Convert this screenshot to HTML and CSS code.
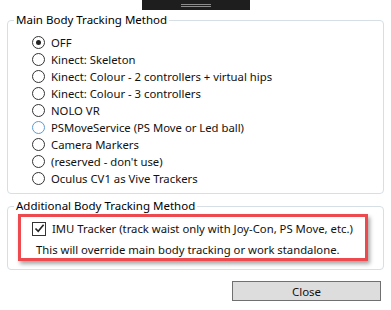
FILE: index.html
```html
<!DOCTYPE html>
<html lang="en">

<head>
  <meta charset="UTF-8">
  <meta name="viewport" content="width=device-width, initial-scale=1.0">
  <title>Tracking Method</title>
  <link rel="stylesheet" href="styles.css">
</head>

<body>
  <!-- window grip at the top -->
  <div class="grip-wrap">
    <div class="grip"><span></span><span></span></div>
  </div>

  <!-- main tracking -->
  <fieldset class="group">
    <legend>Main Body Tracking Method</legend>
    <div class="options">
      <div class="option"><span class="radio checked"></span>OFF</div>
      <div class="option"><span class="radio"></span>Kinect: Skeleton</div>
      <div class="option"><span class="radio"></span>Kinect: Colour - 2 controllers + virtual hips</div>
      <div class="option"><span class="radio"></span>Kinect: Colour - 3 controllers</div>
      <div class="option"><span class="radio"></span>NOLO VR</div>
      <div class="option"><span class="radio hover"></span>PSMoveService (PS Move or Led ball)</div>
      <div class="option"><span class="radio"></span>Camera Markers</div>
      <div class="option"><span class="radio"></span>(reserved - don't use)</div>
      <div class="option"><span class="radio"></span>Oculus CV1 as Vive Trackers</div>
    </div>
  </fieldset>

  <!-- additional tracking -->
  <fieldset class="group group-extra">
    <legend>Additional Body Tracking Method</legend>
    <div class="highlight">
      <div class="option">
        <span class="checkbox">
          <svg width="11" height="11" viewBox="0 0 11 11"><path d="M1.5 5.5 L4.2 8.3 L9.6 1.8" fill="none" stroke="#222" stroke-width="1.6"/></svg>
        </span>
        IMU Tracker (track waist only with Joy-Con, PS Move, etc.)
      </div>
      <div class="note">This will override main body tracking or work standalone.</div>
    </div>
  </fieldset>

  <div class="actions">
    <button class="btn">Close</button>
  </div>
</body>

</html>
```

FILE: styles.css
```css
body {
  margin: 0;
  background: #fff;
  font-family: "Noto Sans", sans-serif;
  font-size: 11.3px;
  color: #111;
}

/* 窗口顶部把手 */
.grip-wrap {
  display: flex;
  justify-content: center;
}

.grip {
  width: 108px;
  height: 10px;
  background: #1e1e1e;
  display: flex;
  flex-direction: column;
  align-items: center;
  justify-content: center;
  gap: 1px;
}

.grip span {
  width: 30px;
  height: 1px;
  background: #8c8c8c;
}

/* 分组框 */
.group {
  margin: 2px 7px 0;
  padding: 6px 6px 6px 6px;
  border: 1px solid #d5dfe5;
  border-radius: 4px;
}

.group legend {
  padding: 0 2px;
  line-height: 16px;
  font-size: 11.5px;
  color: #000;
}

.group-extra {
  margin-top: 4px;
  padding-top: 0;
  padding-bottom: 8px;
}

.options {
  padding-left: 18px;
}

.option {
  display: flex;
  align-items: center;
  height: 17px;
  white-space: nowrap;
}

.radio {
  width: 11px;
  height: 11px;
  border: 1px solid #333;
  border-radius: 50%;
  margin-right: 6px;
  display: flex;
  align-items: center;
  justify-content: center;
  flex-shrink: 0;
}

.radio.checked::after {
  content: "";
  width: 5px;
  height: 5px;
  border-radius: 50%;
  background: #222;
}

.radio.hover {
  border-color: #5b9bd5;
}

/* 红框标注 */
.highlight {
  margin: 0 9px 0 4px;
  border: 3px solid #ec4a4f;
  padding: 3px 0 0 11px;
  box-shadow: 2px 3px 4px rgba(0, 0, 0, 0.35);
}

.checkbox {
  width: 12px;
  height: 12px;
  border: 1px solid #333;
  margin-right: 6px;
  display: flex;
  align-items: center;
  justify-content: center;
  flex-shrink: 0;
}

.note {
  margin-top: 4px;
  padding-left: 4px;
  line-height: 17px;
  white-space: nowrap;
}

.actions {
  display: flex;
  justify-content: flex-end;
  padding: 11px 10px 0 0;
}

.btn {
  width: 149px;
  height: 20px;
  background: #dddddd;
  border: 1px solid #707070;
  font-family: inherit;
  font-size: 11.5px;
  color: #111;
  padding: 0;
}
```
